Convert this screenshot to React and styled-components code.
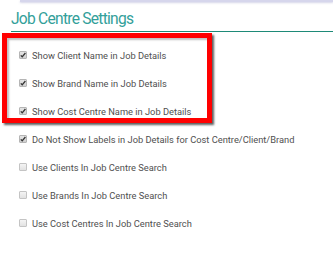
import React from "react";
import styled, { createGlobalStyle } from "styled-components";

const Global = createGlobalStyle`
  html, body { margin: 0; padding: 0; background: #fff; }
  body { font-family: Roboto, "Liberation Sans", Arial, sans-serif; width: 333px; height: 263px; overflow: hidden; }
`;

const Page = styled.div`
  display: flex;
  flex-direction: column;
  width: 333px;
`;

const TopPanel = styled.div`
  margin-left: 20px;
  height: 2px;
  background: #d6d6ec;
  box-shadow: 0 1px 2px rgba(170, 170, 210, 0.5);
`;

const Heading = styled.h2`
  margin: 9px 0 0 11px;
  padding: 0 0 3px 0;
  font-family: Roboto, "Liberation Sans", sans-serif;
  font-weight: 400;
  font-size: 15.6px;
  letter-spacing: -0.75px;
  line-height: 17px;
  color: #33a09a;
  border-bottom: 1px solid #1e8a78;
`;

const Highlight = styled.div`
  margin: 1px 0 0 2px;
  width: 188px;
  border: 5px solid #ff0000;
  padding: 10px 0 0 12px;
  display: flex;
  flex-direction: column;
  gap: 14px;
  height: 70px;
  box-sizing: content-box;
  box-shadow: 2px 2px 2px rgba(40, 40, 40, 0.75), inset 2px 2px 2px rgba(0, 0, 0, 0.25);
`;

const List = styled.div`
  display: flex;
  flex-direction: column;
  gap: 14px;
  padding: 9px 0 0 19px;
`;

const Row = styled.label`
  display: flex;
  align-items: center;
  gap: 5px;
  height: 14px;
  font-size: 9.3px;
  color: #505050;
  white-space: nowrap;
`;

const Box = styled.span`
  width: 8px;
  height: 8px;
  box-sizing: border-box;
  border: 1px solid ${p => (p.$checked ? "#b5b5b5" : "#c4c4c4")};
  border-radius: 1px;
  background: ${p => (p.$checked ? "linear-gradient(#e4e4e4, #cfcfcf)" : "linear-gradient(#f4f4f4, #e2e2e2)")};
  display: flex;
  align-items: center;
  justify-content: center;
  flex: none;
`;

function Check({ checked, children }) {
  return (
    <Row>
      <Box $checked={checked}>
        {checked && (
          <svg width="6" height="6" viewBox="0 0 6 6">
            <path d="M0.8 3.4 L2.2 4.8 L5.4 1" stroke="#333" strokeWidth="1.3" fill="none" />
          </svg>
        )}
      </Box>
      {children}
    </Row>
  );
}

export default function App() {
  return (
    <Page>
      <Global />
      <TopPanel />
      <Heading>Job Centre Settings</Heading>
      <Highlight>
        <Check checked>Show Client Name in Job Details</Check>
        <Check checked>Show Brand Name in Job Details</Check>
        <Check checked>Show Cost Centre Name in Job Details</Check>
      </Highlight>
      <List>
        <Check checked>Do Not Show Labels in Job Details for Cost Centre/Client/Brand</Check>
        <Check>Use Clients In Job Centre Search</Check>
        <Check>Use Brands In Job Centre Search</Check>
        <Check>Use Cost Centres In Job Centre Search</Check>
      </List>
    </Page>
  );
}
